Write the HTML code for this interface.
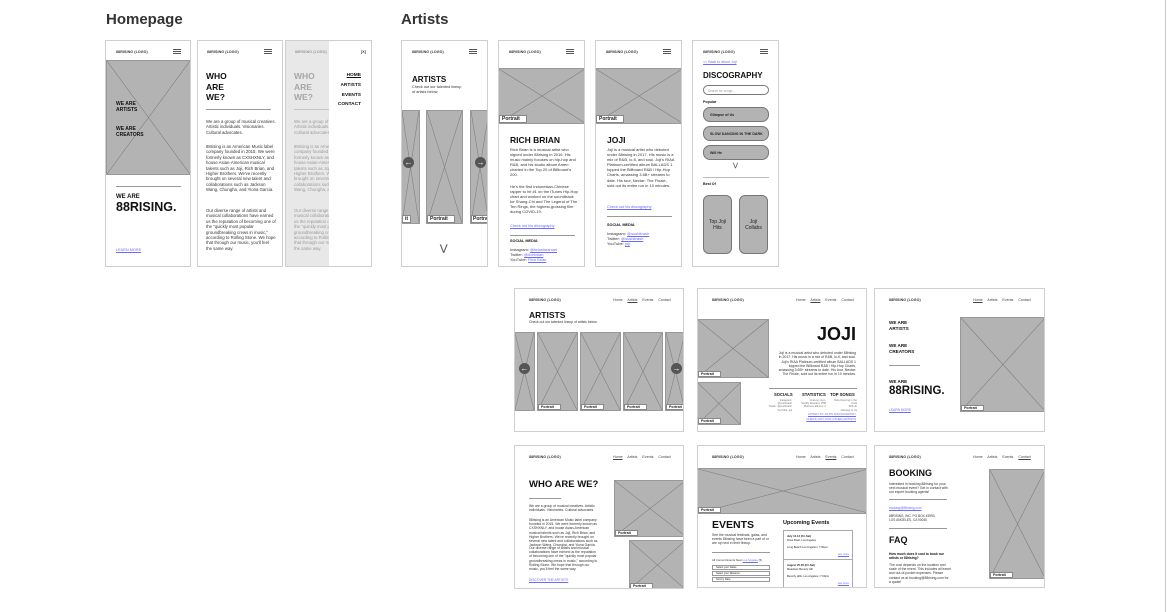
<!DOCTYPE html>
<html><head><meta charset="utf-8">
<style>
*{margin:0;padding:0;box-sizing:border-box}
body{width:1167px;height:612px;background:#fff;position:relative;overflow:hidden;font-family:"Liberation Sans",sans-serif;color:#222}
.a{position:absolute}
.f{position:absolute;background:#fff;border:1px solid #cfcfcf;overflow:hidden}
.ph{position:absolute;background:#b3b3b3;border:1px solid #999;overflow:hidden}
.ph svg{position:absolute;left:0;top:0;width:100%;height:100%}
.lbl{position:absolute;left:0;bottom:0;background:#fff;border:1px solid #888;font-size:5px;padding:0 6px 0 2px;line-height:6px;font-weight:bold;color:#222}
.logo{position:absolute;font-size:3.6px;font-weight:bold;color:#333;letter-spacing:.1px}
.ham{position:absolute;width:8px;height:5px;border-top:1px solid #555;border-bottom:1px solid #555}
.ham:after{content:"";position:absolute;left:0;right:0;top:1px;border-top:1px solid #555}
.t{position:absolute;font-size:4.3px;line-height:5.4px;color:#333}
.h{position:absolute;font-weight:bold;color:#111;line-height:1}
.ln{position:absolute;height:1px;background:#999}
.lk{color:#6a6aff;text-decoration:underline}
.nav{position:absolute;font-size:3.6px;color:#444;word-spacing:4px}
.nav u{text-decoration:underline}
.arr{position:absolute;width:11px;height:11px;border-radius:50%;background:#555;color:#fff;font-size:8px;line-height:11px;text-align:center;font-weight:bold}
.pill{position:absolute;background:#b3b3b3;border:1px solid #777;border-radius:7px;font-size:3.6px;font-weight:bold;padding-left:6px;display:flex;align-items:center}
</style></head><body>
<svg width="0" height="0" style="position:absolute"><defs><symbol id="x" viewBox="0 0 100 100" preserveAspectRatio="none"><path d="M0 0L100 100M100 0L0 100" stroke="#808080" stroke-width="0.6" vector-effect="non-scaling-stroke" fill="none"/></symbol></defs></svg>
<div class="a" style="left:1165px;top:0;width:1px;height:612px;background:#ccc"></div>

<div class="a" style="left:106px;top:11px;font-size:15px;font-weight:bold;color:#333">Homepage</div>
<div class="a" style="left:401px;top:11px;font-size:15px;font-weight:bold;color:#333">Artists</div>

<!-- M1 -->
<div class="f" style="left:105px;top:40px;width:86px;height:227px">
 <div class="logo" style="left:10px;top:9px">88RISING (LOGO)</div><div class="ham" style="left:67px;top:8px"></div>
 <div class="ph" style="left:0;top:19px;width:85px;height:115px"><svg><use href="#x"/></svg></div>
 <div class="h" style="left:10px;top:60px;font-size:5px;line-height:6px">WE ARE<br>ARTISTS</div>
 <div class="h" style="left:10px;top:85px;font-size:5px;line-height:6px">WE ARE<br>CREATORS</div>
 <div class="ln" style="left:10px;top:145px;width:65px"></div>
 <div class="h" style="left:10px;top:153px;font-size:6px">WE ARE</div>
 <div class="h" style="left:10px;top:160px;font-size:12.5px">88RISING.</div>
 <div class="t lk" style="left:10px;top:207px;font-size:3.8px">LEARN MORE</div>
</div>

<!-- M2 -->
<div class="f" style="left:197px;top:40px;width:86px;height:227px">
 <div class="logo" style="left:9px;top:9px">88RISING (LOGO)</div><div class="ham" style="left:66px;top:8px"></div>
 <div class="h" style="left:8px;top:30px;font-size:8.5px;line-height:10.5px">WHO<br>ARE<br>WE?</div>
 <div class="ln" style="left:8px;top:68px;width:65px"></div>
 <div class="t" style="left:8px;top:78px;width:70px">We are a group of musical creatives. Artistic individuals. Visionaries. Cultural advocates.</div>
 <div class="t" style="left:8px;top:103px;width:70px">88rising is an American Music label company founded in 2015. We were formerly known as CXSHXNLY, and house Asian-American musical talents such as Joji, Rich Brian, and Higher Brothers. We've recently brought on several new talent and collaborations such as Jackson Wang, Chungha, and Yiona Garcia.</div>
 <div class="t" style="left:8px;top:167px;width:70px">Our diverse range of artists and musical collaborations have earned us the reputation of becoming one of the "quickly most popular groundbreaking crews in music," according to Rolling Stone. We hope that through our music, you'll feel the same way.</div>
</div>

<!-- M3 -->
<div class="f" style="left:285px;top:40px;width:87px;height:227px;background:#e8e8e8">
 <div style="opacity:.45">
 <div class="logo" style="left:9px;top:9px">88RISING (LOGO)</div>
 <div class="h" style="left:8px;top:30px;font-size:8.5px;line-height:10.5px;color:#555">WHO<br>ARE<br>WE?</div>
 <div class="ln" style="left:8px;top:68px;width:65px"></div>
 <div class="t" style="left:8px;top:78px;width:70px">We are a group of musical creatives. Artistic individuals. Visionaries. Cultural advocates.</div>
 <div class="t" style="left:8px;top:103px;width:70px">88rising is an American Music label company founded in 2015. We were formerly known as CXSHXNLY, and house Asian-American musical talents such as Joji, Rich Brian, and Higher Brothers. We've recently brought on several new talent and collaborations such as Jackson Wang, Chungha, and Yiona Garcia.</div>
 <div class="t" style="left:8px;top:167px;width:70px">Our diverse range of artists and musical collaborations have earned us the reputation of becoming one of the "quickly most popular groundbreaking crews in music," according to Rolling Stone. We hope that through our music, you'll feel the same way.</div>
 </div>
 <div class="a" style="left:43px;top:0;width:44px;height:227px;background:#fff"></div>
 <div class="logo" style="left:75px;top:9px">[X]</div>
 <div class="h" style="right:10px;top:30px;font-size:4.8px;line-height:9.8px;text-align:right"><u>HOME</u><br>ARTISTS<br>EVENTS<br>CONTACT</div>
</div>

<!-- A1 -->
<div class="f" style="left:401px;top:40px;width:87px;height:227px">
 <div class="logo" style="left:10px;top:9px">88RISING (LOGO)</div><div class="ham" style="left:67px;top:8px"></div>
 <div class="h" style="left:10px;top:35px;font-size:8px">ARTISTS</div>
 <div class="t" style="left:10px;top:44px;width:50px;font-size:3.8px;line-height:4.6px">Check out our talented lineup of artists below.</div>
 <div class="ph" style="left:-1px;top:69px;width:19px;height:114px"><svg><use href="#x"/></svg><div class="lbl" style="padding:0 2px">it</div></div>
 <div class="ph" style="left:24px;top:69px;width:37px;height:114px"><svg><use href="#x"/></svg><div class="lbl">Portrait</div></div>
 <div class="ph" style="left:68px;top:69px;width:20px;height:114px"><svg><use href="#x"/></svg><div class="lbl" style="padding:0 1px">Portra</div></div>
 <div class="arr" style="left:1px;top:116px">&#8592;</div>
 <div class="arr" style="left:73px;top:116px">&#8594;</div>
 <div class="h" style="left:38px;top:203px;font-size:9px;color:#666">&#8897;</div>
</div>

<!-- A2 -->
<div class="f" style="left:498px;top:40px;width:87px;height:227px">
 <div class="logo" style="left:10px;top:9px">88RISING (LOGO)</div><div class="ham" style="left:67px;top:8px"></div>
 <div class="ph" style="left:-1px;top:27px;width:88px;height:56px"><svg><use href="#x"/></svg><div class="lbl">Portrait</div></div>
 <div class="h" style="left:11px;top:95px;font-size:8.5px">RICH BRIAN</div>
 <div class="t" style="left:11px;top:106px;width:68px;font-size:4px;line-height:5.1px">Rich Brian is a musical artist who signed under 88rising in 2016. His music mainly focuses on hip-hop and R&amp;B, and his studio album Amen charted in the Top 20 of Billboard's 200.</div>
 <div class="t" style="left:11px;top:143px;width:68px;font-size:4px;line-height:5.1px">He's the first Indonesian-Chinese rapper to hit #1 on the iTunes Hip-Hop chart and worked on the soundtrack for Shang-Chi and The Legend of The Ten Rings, the highest-grossing film during COVID-19.</div>
 <div class="t lk" style="left:11px;top:183px;font-size:3.8px">Check out his discography</div>
 <div class="ln" style="left:11px;top:194px;width:65px"></div>
 <div class="h" style="left:11px;top:199px;font-size:3.8px">SOCIAL MEDIA</div>
 <div class="t" style="left:11px;top:207px;font-size:4px;line-height:4.8px">Instagram: <span class="lk">@brianimanuel</span><br>Twitter: <span class="lk">@richbrian</span><br>YouTube: <span class="lk">Rich Brian</span></div>
</div>

<!-- A3 -->
<div class="f" style="left:595px;top:40px;width:87px;height:227px">
 <div class="logo" style="left:10px;top:9px">88RISING (LOGO)</div><div class="ham" style="left:67px;top:8px"></div>
 <div class="ph" style="left:-1px;top:27px;width:88px;height:56px"><svg><use href="#x"/></svg><div class="lbl">Portrait</div></div>
 <div class="h" style="left:11px;top:95px;font-size:8.5px">JOJI</div>
 <div class="t" style="left:11px;top:106px;width:68px;font-size:4px;line-height:5.1px">Joji is a musical artist who debuted under 88rising in 2017. His music is a mix of R&amp;B, lo-fi, and soul. Joji's RIAA Platinum-certified album BALLADS 1 topped the Billboard R&amp;B / Hip-Hop Charts, amassing 3.6B+ streams to date. His tour, Nectar: The Finale, sold out its entire run in 10 minutes.</div>
 <div class="t lk" style="left:11px;top:164px;font-size:3.8px">Check out his discography</div>
 <div class="ln" style="left:11px;top:175px;width:65px"></div>
 <div class="h" style="left:11px;top:183px;font-size:3.8px">SOCIAL MEDIA</div>
 <div class="t" style="left:11px;top:191px;font-size:4px;line-height:4.8px">Instagram: <span class="lk">@sushitrash</span><br>Twitter: <span class="lk">@sushitrash</span><br>YouTube: <span class="lk">joji</span></div>
</div>

<!-- A4 -->
<div class="f" style="left:692px;top:40px;width:87px;height:227px">
 <div class="logo" style="left:10px;top:9px">88RISING (LOGO)</div><div class="ham" style="left:67px;top:8px"></div>
 <div class="t lk" style="left:10px;top:19px;font-size:3.6px">&lt;&lt; Back to about Joji</div>
 <div class="h" style="left:10px;top:31px;font-size:8px">DISCOGRAPHY</div>
 <div class="a" style="left:10px;top:44px;width:66px;height:10px;border:1px solid #777;border-radius:5px;font-size:3.2px;color:#999;padding:2.5px 4px">Search for songs...</div>
 <div class="h" style="left:10px;top:60px;font-size:3.6px">Popular</div>
 <div class="pill" style="left:10px;top:66px;width:66px;height:15px">Glimpse of Us</div>
 <div class="pill" style="left:10px;top:85px;width:66px;height:15px">SLOW DANCING IN THE DARK</div>
 <div class="pill" style="left:10px;top:104px;width:66px;height:15px">Will He</div>
 <div class="h" style="left:40px;top:122px;font-size:6px;color:#666">&#8897;</div>
 <div class="ln" style="left:10px;top:136px;width:66px;background:#bbb"></div>
 <div class="h" style="left:10px;top:142px;font-size:3.6px">Best Of</div>
 <div class="pill" style="left:10px;top:154px;width:29px;height:59px;border-radius:6px;font-weight:normal;font-size:5px;padding:0;justify-content:center;text-align:center">Top Joji<br>Hits</div>
 <div class="pill" style="left:46px;top:154px;width:29px;height:59px;border-radius:6px;font-weight:normal;font-size:5px;padding:0;justify-content:center;text-align:center">Joji<br>Collabs</div>
</div>

<!-- D1 -->
<div class="f" style="left:514px;top:288px;width:170px;height:144px">
 <div class="logo" style="left:14px;top:9px">88RISING (LOGO)</div>
 <div class="nav" style="left:98px;top:9px">Home <u>Artists</u> Events Contact</div>
 <div class="h" style="left:14px;top:22px;font-size:8.5px">ARTISTS</div>
 <div class="t" style="left:14px;top:31px;font-size:3.4px">Check out our talented lineup of artists below.</div>
 <div class="ph" style="left:-1px;top:43px;width:21px;height:79px"><svg><use href="#x"/></svg></div>
 <div class="ph" style="left:22px;top:43px;width:41px;height:79px"><svg><use href="#x"/></svg><div class="lbl" style="font-size:3.6px;line-height:4.5px">Portrait</div></div>
 <div class="ph" style="left:65px;top:43px;width:41px;height:79px"><svg><use href="#x"/></svg><div class="lbl" style="font-size:3.6px;line-height:4.5px">Portrait</div></div>
 <div class="ph" style="left:108px;top:43px;width:40px;height:79px"><svg><use href="#x"/></svg><div class="lbl" style="font-size:3.6px;line-height:4.5px">Portrait</div></div>
 <div class="ph" style="left:150px;top:43px;width:21px;height:79px"><svg><use href="#x"/></svg><div class="lbl" style="font-size:3.6px;line-height:4.5px">Portrait</div></div>
 <div class="arr" style="left:4px;top:74px">&#8592;</div>
 <div class="arr" style="left:156px;top:74px">&#8594;</div>
</div>

<!-- D2 -->
<div class="f" style="left:697px;top:288px;width:170px;height:144px">
 <div class="logo" style="left:14px;top:9px">88RISING (LOGO)</div>
 <div class="nav" style="left:98px;top:9px">Home <u>Artists</u> Events Contact</div>
 <div class="ph" style="left:-1px;top:30px;width:72px;height:59px"><svg><use href="#x"/></svg><div class="lbl" style="font-size:3.6px;line-height:4.5px">Portrait</div></div>
 <div class="ph" style="left:-1px;top:93px;width:44px;height:43px"><svg><use href="#x"/></svg><div class="lbl" style="font-size:3.6px;line-height:4.5px">Portrait</div></div>
 <div class="h" style="right:10px;top:36px;font-size:18px">JOJI</div>
 <div class="t" style="right:10px;top:62px;width:80px;text-align:right;font-size:3.5px;line-height:4.3px">Joji is a musical artist who debuted under 88rising in 2017. His music is a mix of R&amp;B, lo-fi, and soul. Joji's RIAA Platinum-certified album BALLADS 1 topped the Billboard R&amp;B / Hip-Hop Charts, amassing 3.6B+ streams to date. His tour, Nectar: The Finale, sold out its entire run in 10 minutes.</div>
 <div class="ln" style="left:71px;top:99px;width:88px"></div>
 <div class="h" style="left:76px;top:104px;font-size:4.2px;word-spacing:1px">SOCIALS</div>
 <div class="h" style="left:104px;top:104px;font-size:4.2px">STATISTICS</div>
 <div class="h" style="left:132px;top:104px;font-size:4.2px">TOP SONGS</div>
 <div class="t" style="left:70px;top:110px;width:24px;text-align:right;font-size:2.6px;line-height:3.2px;color:#777">Instagram: @sushitrash<br>Twitter: @sushitrash<br>YouTube: joji</div>
 <div class="t" style="left:96px;top:110px;width:32px;text-align:right;font-size:2.6px;line-height:3.2px;color:#777">Grammy nom.<br>Spotify listeners: 25M<br>Platinum albums: 2</div>
 <div class="t" style="left:130px;top:110px;width:29px;text-align:right;font-size:2.6px;line-height:3.2px;color:#777">Slow Dancing in the Dark<br>Will He<br>Glimpse of Us</div>
 <div class="t lk" style="right:10px;top:123px;font-size:3px;line-height:4.5px;text-align:right">LISTEN TO JOJI'S DISCOGRAPHY<br>CHECK OUT OUR OTHER ARTISTS</div>
</div>

<!-- D3 -->
<div class="f" style="left:874px;top:288px;width:171px;height:144px">
 <div class="logo" style="left:14px;top:9px">88RISING (LOGO)</div>
 <div class="nav" style="left:98px;top:9px"><u>Home</u> Artists Events Contact</div>
 <div class="h" style="left:14px;top:31px;font-size:4.6px;line-height:5.8px">WE ARE<br>ARTISTS</div>
 <div class="h" style="left:14px;top:54px;font-size:4.6px;line-height:5.8px">WE ARE<br>CREATORS</div>
 <div class="ln" style="left:14px;top:76px;width:31px"></div>
 <div class="h" style="left:14px;top:91px;font-size:4.6px">WE ARE</div>
 <div class="h" style="left:14px;top:97px;font-size:11.5px">88RISING.</div>
 <div class="t lk" style="left:14px;top:119px;font-size:3.3px">LEARN MORE</div>
 <div class="ph" style="left:85px;top:28px;width:86px;height:95px"><svg><use href="#x"/></svg><div class="lbl" style="font-size:3.6px;line-height:4.5px">Portrait</div></div>
</div>

<!-- D4 -->
<div class="f" style="left:514px;top:445px;width:170px;height:144px">
 <div class="logo" style="left:14px;top:9px">88RISING (LOGO)</div>
 <div class="nav" style="left:98px;top:9px"><u>Home</u> Artists Events Contact</div>
 <div class="h" style="left:14px;top:34px;font-size:9.5px">WHO ARE WE?</div>
 <div class="ln" style="left:14px;top:52px;width:32px"></div>
 <div class="t" style="left:14px;top:58px;width:70px;font-size:3.4px;line-height:4.2px">We are a group of musical creatives. Artistic individuals. Visionaries. Cultural advocates.</div>
 <div class="t" style="left:14px;top:72px;width:70px;font-size:3.4px;line-height:4.2px">88rising is an American Music label company founded in 2015. We were formerly known as CXSHXNLY, and house Asian-American musical talents such as Joji, Rich Brian, and Higher Brothers. We've recently brought on several new talent and collaborations such as Jackson Wang, Chungha, and Yiona Garcia.</div>
 <div class="t" style="left:14px;top:100px;width:70px;font-size:3.4px;line-height:4.2px">Our diverse range of artists and musical collaborations have earned us the reputation of becoming one of the "quickly most popular groundbreaking crews in music," according to Rolling Stone. We hope that through our music, you'll feel the same way.</div>
 <div class="t lk" style="left:14px;top:132px;font-size:3.3px">DISCOVER THE ARTISTS</div>
 <div class="ph" style="left:99px;top:34px;width:72px;height:57px"><svg><use href="#x"/></svg><div class="lbl" style="font-size:3.6px;line-height:4.5px">Portrait</div></div>
 <div class="ph" style="left:114px;top:94px;width:57px;height:50px"><svg><use href="#x"/></svg><div class="lbl" style="font-size:3.6px;line-height:4.5px">Portrait</div></div>
</div>

<!-- D5 -->
<div class="f" style="left:697px;top:445px;width:170px;height:143px">
 <div class="logo" style="left:14px;top:9px">88RISING (LOGO)</div>
 <div class="nav" style="left:98px;top:9px">Home Artists <u>Events</u> Contact</div>
 <div class="ph" style="left:-1px;top:22px;width:172px;height:46px"><svg><use href="#x"/></svg><div class="lbl" style="font-size:3.6px;line-height:4.5px">Portrait</div></div>
 <div class="h" style="left:14px;top:74px;font-size:10.5px">EVENTS</div>
 <div class="t" style="left:14px;top:87px;width:58px;font-size:3.4px;line-height:4.2px;color:#333">See the musical festivals, galas, and events 88rising have been a part of or are up next in their lineup.</div>
 <div class="ln" style="left:14px;top:106px;width:58px"></div>
 <div class="t" style="left:14px;top:112px;font-size:2.8px">All Concert Events Near <span class="lk">Los Angeles</span> (5)</div>
 <div class="a" style="left:14px;top:119px;width:58px;height:5px;border:1px solid #999;font-size:2.6px;padding-left:3px;line-height:3px">Select your Dates</div>
 <div class="a" style="left:14px;top:125px;width:58px;height:5px;border:1px solid #999;font-size:2.6px;padding-left:3px;line-height:3px">Select your Distance</div>
 <div class="a" style="left:14px;top:131px;width:58px;height:5px;border:1px solid #999;font-size:2.6px;padding-left:3px;line-height:3px">Sort by Date</div>
 <div class="h" style="left:85px;top:75px;font-size:5.5px">Upcoming Events</div>
 <div class="a" style="left:85px;top:84px;width:70px;height:30px;border:1px solid #aaa;font-size:2.7px;line-height:3.6px;padding:4px 3px"><b>July 12-13 (Fri-Sat)</b><br>Rose Bowl, Los Angeles<br><br>Long Beach Los Angeles | 7:00pm<div style="position:absolute;right:3px;bottom:2px" class="lk">see more</div></div>
 <div class="a" style="left:85px;top:113px;width:70px;height:30px;border:1px solid #aaa;font-size:2.7px;line-height:3.6px;padding:4px 3px"><b>August 25-26 (Fri-Sat)</b><br>Meadows Beverly Hill<br><br>Beverly Hills, Los Angeles | 7:00pm<div style="position:absolute;right:3px;bottom:2px" class="lk">see more</div></div>
</div>

<!-- D6 -->
<div class="f" style="left:874px;top:445px;width:171px;height:143px">
 <div class="logo" style="left:14px;top:9px">88RISING (LOGO)</div>
 <div class="nav" style="left:98px;top:9px">Home Artists Events <u>Contact</u></div>
 <div class="h" style="left:14px;top:23px;font-size:9px">BOOKING</div>
 <div class="t" style="left:14px;top:36px;width:62px;font-size:3.4px;line-height:4.2px;color:#333">Interested in booking 88rising for your next musical event? Get in contact with our expert booking agents!</div>
 <div class="ln" style="left:14px;top:53px;width:58px"></div>
 <div class="t lk" style="left:14px;top:60px;font-size:3.2px">booking@88rising.com</div>
 <div class="t" style="left:14px;top:68px;font-size:3.2px;line-height:4px;color:#333">88RISING, INC. PO BOX 45993,<br>LOS ANGELES, CA 90045</div>
 <div class="ln" style="left:14px;top:82px;width:58px"></div>
 <div class="h" style="left:14px;top:90px;font-size:9px">FAQ</div>
 <div class="h" style="left:14px;top:106px;font-size:3.3px;line-height:4.1px;width:60px">How much does it cost to book our artists or 88rising?</div>
 <div class="t" style="left:14px;top:117px;width:62px;font-size:3.4px;line-height:4.2px;color:#333">The cost depends on the location and scale of the event. This includes all travel and out-of-pocket expenses. Please contact us at booking@88rising.com for a quote!</div>
 <div class="ph" style="left:114px;top:23px;width:57px;height:110px"><svg><use href="#x"/></svg><div class="lbl" style="font-size:3.6px;line-height:4.5px">Portrait</div></div>
</div>
</body></html>
